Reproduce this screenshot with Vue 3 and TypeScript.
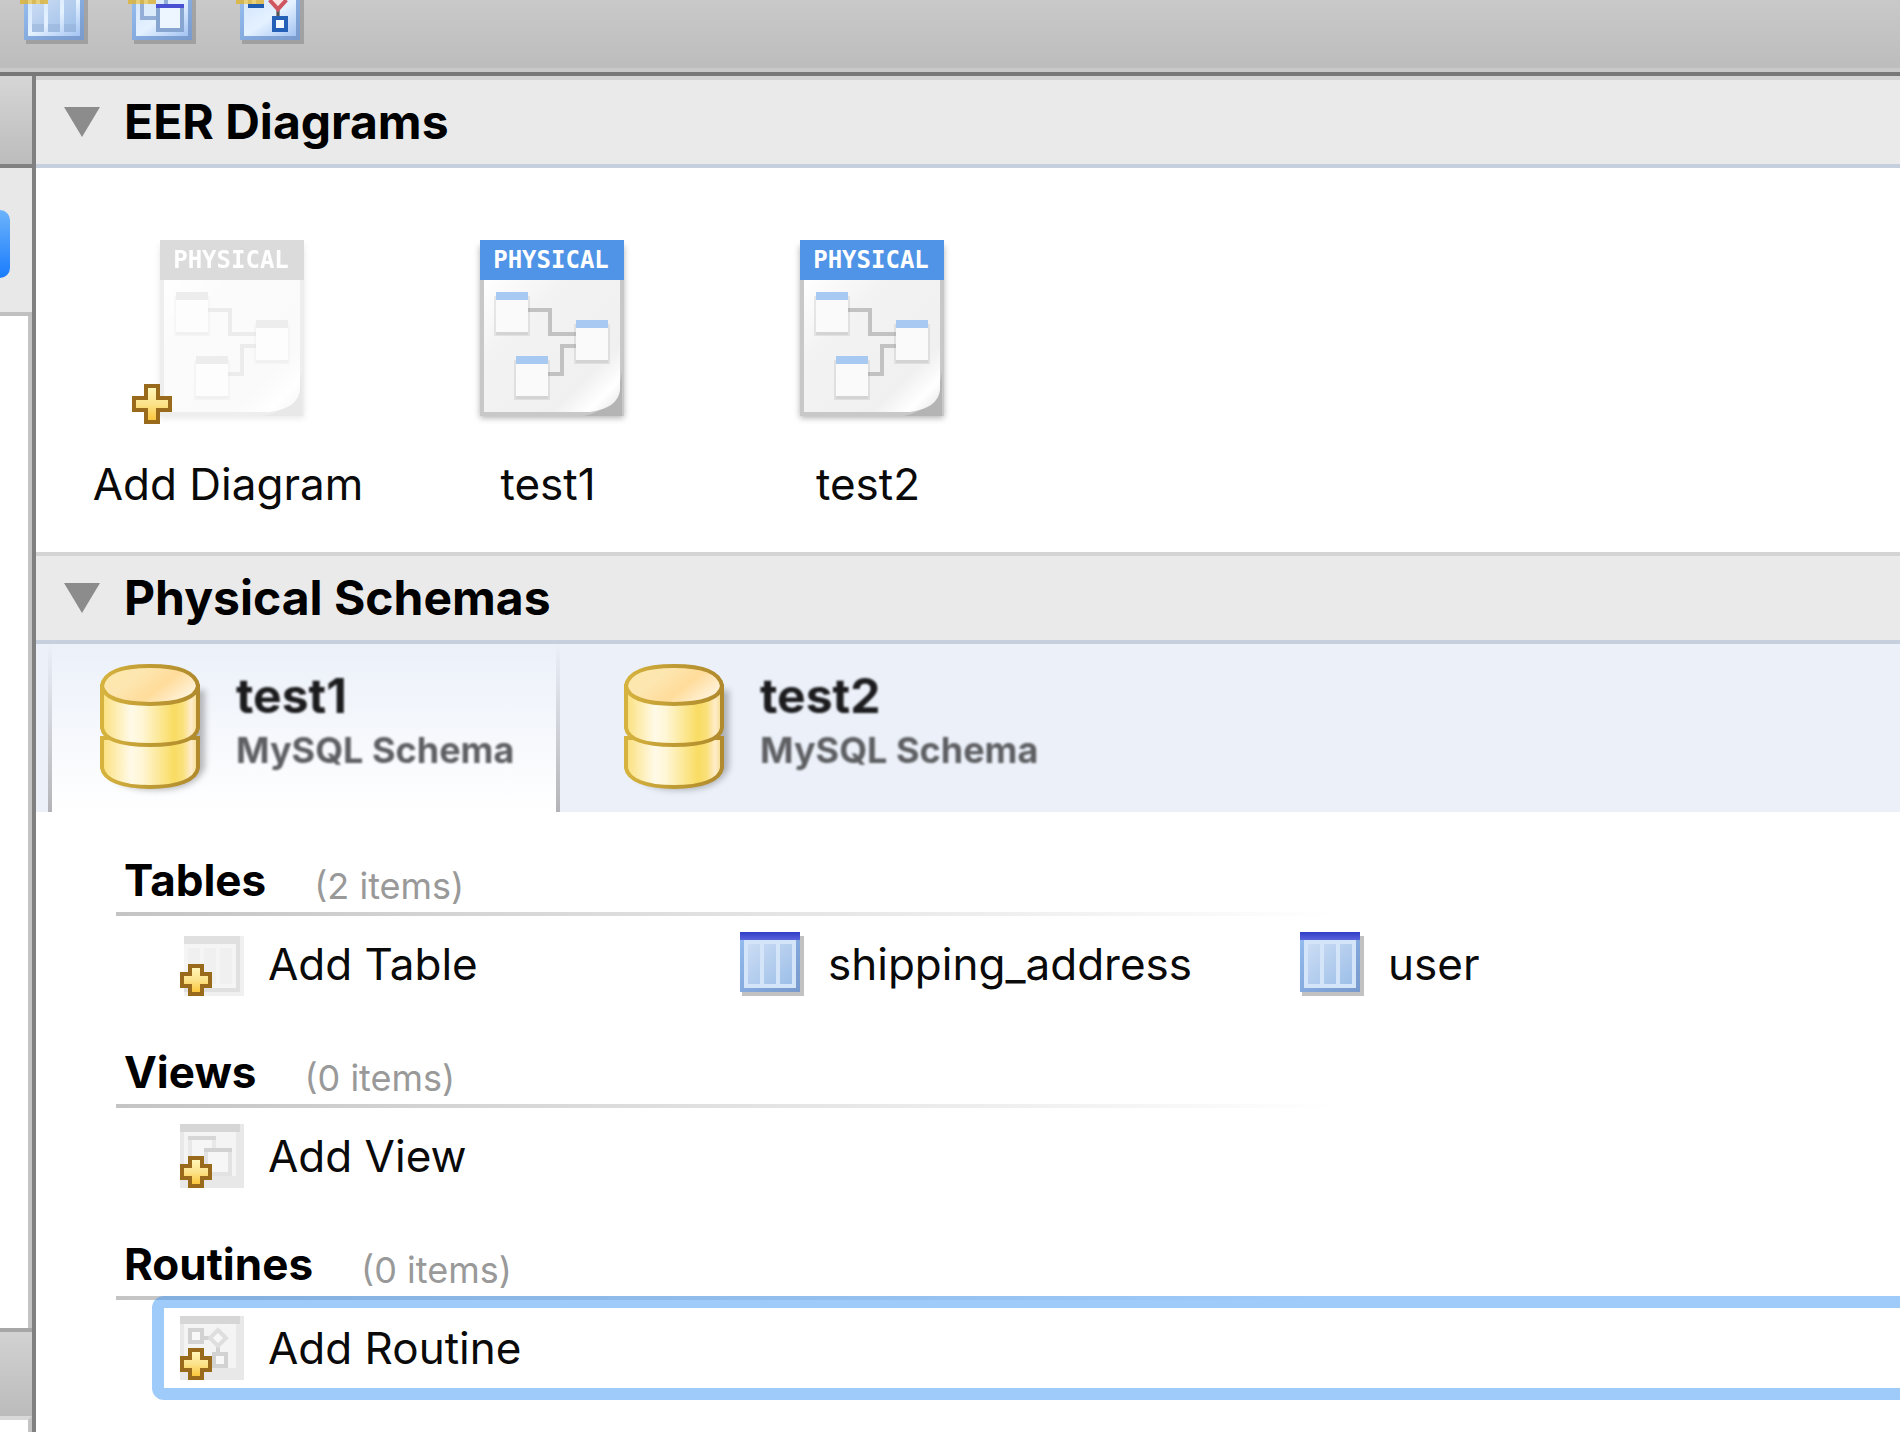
<script setup lang="ts">
import { ref } from 'vue'

type ItemKind = 'table' | 'view' | 'routine'

interface Item {
  label: string
  add: boolean
}

interface Group {
  title: string
  kind: ItemKind
  count: string
  focused: boolean
  items: Item[]
}

const tools: { kind: ItemKind; label: string }[] = [
  { kind: 'table', label: 'New table' },
  { kind: 'view', label: 'New view' },
  { kind: 'routine', label: 'New routine' },
]

const diagrams: Item[] = [
  { label: 'Add Diagram', add: true },
  { label: 'test1', add: false },
  { label: 'test2', add: false },
]

const schemas = ['test1', 'test2']
const activeSchema = ref('test1')

const groups: Group[] = [
  {
    title: 'Tables',
    kind: 'table',
    count: '(2 items)',
    focused: false,
    items: [
      { label: 'Add Table', add: true },
      { label: 'shipping_address', add: false },
      { label: 'user', add: false },
    ],
  },
  { title: 'Views', kind: 'view', count: '(0 items)', focused: false, items: [{ label: 'Add View', add: true }] },
  { title: 'Routines', kind: 'routine', count: '(0 items)', focused: true, items: [{ label: 'Add Routine', add: true }] },
]
</script>

<template>
  <div class="app">
    <svg class="defs" width="0" height="0" aria-hidden="true">
      <defs>
        <linearGradient id="gold" x1="0" y1="0" x2="0" y2="1">
          <stop offset="0" stop-color="#fff6b8" />
          <stop offset="0.5" stop-color="#fbe28a" />
          <stop offset="1" stop-color="#fbc63c" />
        </linearGradient>
        <linearGradient id="cell" x1="0" y1="0" x2="1" y2="1">
          <stop offset="0" stop-color="#cbdcf4" />
          <stop offset="1" stop-color="#9dbfe8" />
        </linearGradient>
        <linearGradient id="frame" x1="0" y1="0" x2="1" y2="1">
          <stop offset="0" stop-color="#94bdf0" />
          <stop offset="1" stop-color="#7899cc" />
        </linearGradient>
        <linearGradient id="sheen" x1="0" y1="0" x2="1" y2="1">
          <stop offset="0" stop-color="#d4e6fc" />
          <stop offset="0.5" stop-color="#e4f1ff" />
          <stop offset="1" stop-color="#a3c3f2" />
        </linearGradient>
        <linearGradient id="bar" x1="0" y1="0" x2="0" y2="1">
          <stop offset="0" stop-color="#2f3cc4" />
          <stop offset="1" stop-color="#5a62dc" />
        </linearGradient>
        <linearGradient id="paper" x1="0" y1="0" x2="1" y2="1">
          <stop offset="0" stop-color="#ffffff" />
          <stop offset="0.3" stop-color="#f4f3f3" />
          <stop offset="0.75" stop-color="#f1f0f0" />
          <stop offset="0.88" stop-color="#ffffff" />
          <stop offset="1" stop-color="#e4e4e4" />
        </linearGradient>
        <linearGradient id="drum" x1="0" y1="0" x2="1" y2="0">
          <stop offset="0" stop-color="#fbe07c" />
          <stop offset="0.3" stop-color="#fffae8" />
          <stop offset="0.42" stop-color="#fff6d4" />
          <stop offset="0.75" stop-color="#f9dc62" />
          <stop offset="0.84" stop-color="#fae07a" />
          <stop offset="0.93" stop-color="#ffeccb" />
          <stop offset="1" stop-color="#f5dc84" />
        </linearGradient>
        <linearGradient id="lid" x1="0" y1="0" x2="1" y2="0.5">
          <stop offset="0" stop-color="#fbe9ac" />
          <stop offset="0.4" stop-color="#fde6b0" />
          <stop offset="0.7" stop-color="#ffdc9a" />
          <stop offset="1" stop-color="#fff0d4" />
        </linearGradient>
        <linearGradient id="rim" x1="0" y1="0" x2="1" y2="0">
          <stop offset="0" stop-color="#d6b23e" />
          <stop offset="0.5" stop-color="#bf9b34" />
          <stop offset="1" stop-color="#b08a2c" />
        </linearGradient>
        <filter id="soft" x="-20%" y="-20%" width="150%" height="150%">
          <feGaussianBlur stdDeviation="3" />
        </filter>
      </defs>
    </svg>

    <header class="toolbar">
      <button v-for="tool in tools" :key="tool.kind" class="tool" type="button" :aria-label="tool.label">
        <svg viewBox="-1 5 17 11" aria-hidden="true">
          <path d="M0.5 5h15.5v11h-15.5z" fill="#777" opacity="0.45" />
          <path d="M0 5h15v10h-15z" fill="url(#frame)" />
          <path d="M1 5h13v9h-13z" fill="url(#sheen)" />
          <g v-if="tool.kind === 'table'">
            <path d="M2 5h3v8h-3zM6 5h3v8h-3zM10 5h3v8h-3z" fill="url(#cell)" />
            <path d="M2 11h3v2h-3zM6 11h3v2h-3zM10 11h3v2h-3z" fill="#8fabd0" opacity="0.4" />
          </g>
          <g v-else-if="tool.kind === 'view'">
            <path d="M2.5 5v4.5h6V5" fill="#dcebfc" stroke="#93afd8" />
            <path d="M6.5 6.5h6v6h-6z" fill="#edf5ff" stroke="#86a5d0" />
            <path d="M6 6h7v1h-7z" fill="#4a50d2" />
          </g>
          <g v-else>
            <path d="M9.5 7.5v2" stroke="#555" stroke-width="0.8" />
            <path d="M7.4 5L9.5 7.3 11.6 5" fill="#fbe3e3" stroke="#cf5560" />
            <path d="M2 6h4v1h-4z" fill="#1d5bb0" />
            <path d="M8.5 9.5h3v3h-3z" fill="#f4faff" stroke="#2560b8" />
          </g>
          <path d="M-1 5h2v1h-2zM2 5h1v1h-1zM4 5h2v1h-2z" fill="#dcb43c" opacity="0.85" />
          <path d="M1 5h1v1h-1zM3 5h1v1h-1z" fill="#e8cf7a" />
        </svg>
      </button>
    </header>

    <div class="workspace">
      <aside class="sidebar">
        <div class="side-head"></div>
        <div class="side-tools">
          <button class="side-select" type="button" aria-label="View options"></button>
        </div>
        <div class="side-list"></div>
        <div class="side-bar"></div>
        <div class="side-foot"></div>
      </aside>

      <main class="content">
        <section>
          <h2 class="section-head">
            <svg class="arrow" viewBox="0 0 36 30" aria-hidden="true"><path d="M0 0h36L18 30z" fill="#8c8c8c" /></svg>
            EER Diagrams
          </h2>
          <div class="diagrams">
            <button v-for="d in diagrams" :key="d.label" class="diagram" type="button">
              <svg class="diagram-icon" viewBox="0 0 192 192" aria-hidden="true">
                <g :class="{ ghost: d.add }">
                  <rect x="28" y="14" width="144" height="172" fill="#555" opacity="0.45" filter="url(#soft)" />
                  <rect x="28" y="40" width="144" height="144" fill="#c8c8c8" />
                  <path d="M132 184q32-6 38-44v44z" fill="#b4b4b4" />
                  <path d="M32 46h136v112q-2 18-30 22H32z" fill="url(#paper)" />
                  <rect x="28" y="8" width="144" height="40" fill="#4f94e6" />
                  <g fill="none" stroke="#c2c2c2" stroke-width="4">
                    <path d="M76 78h22v24h26" />
                    <path d="M96 142h14v-28h14" />
                  </g>
                  <g v-for="box in [[44, 60], [124, 88], [64, 124]]" :key="box[0]">
                    <rect :x="box[0] - 2" :y="box[1] + 4" width="36" height="40" fill="#999" opacity="0.2" />
                    <rect :x="box[0]" :y="box[1]" width="32" height="43" fill="#d4d4d4" />
                    <rect :x="box[0]" :y="box[1]" width="32" height="40" fill="#fafafa" />
                    <rect :x="box[0]" :y="box[1]" width="32" height="8" fill="#a8caf2" />
                  </g>
                  <text x="99" y="36" text-anchor="middle" class="stamp">PHYSICAL</text>
                </g>
                <g v-if="d.add">
                  <path d="M12 152h16v12h12v16H28v12H12v-12H0v-16h12z" fill="#9a6a1c" />
                  <path d="M16 156h8v12h12v8H24v12h-8v-12H4v-8h12z" fill="url(#gold)" />
                </g>
              </svg>
              <span class="diagram-label">{{ d.label }}</span>
            </button>
          </div>
        </section>

        <section>
          <h2 class="section-head">
            <svg class="arrow" viewBox="0 0 36 30" aria-hidden="true"><path d="M0 0h36L18 30z" fill="#8c8c8c" /></svg>
            Physical Schemas
          </h2>
          <div class="tabs" role="tablist">
            <button
              v-for="name in schemas"
              :key="name"
              class="tab"
              :class="{ active: name === activeSchema }"
              type="button"
              role="tab"
              :aria-selected="name === activeSchema"
              @click="activeSchema = name"
            >
              <svg class="drum" viewBox="0 0 104 128" aria-hidden="true">
                <path d="M8 26v78q8 22 48 22t49-22V26z" fill="#555" opacity="0.4" filter="url(#soft)" />
                <g stroke="url(#rim)" stroke-width="4">
                  <path d="M2 74v30c2 12 20 19 48 19s46-7 48-19V74z" fill="url(#drum)" />
                  <path d="M2 22v42c2 12 20 17 48 17s46-5 48-17V22z" fill="url(#drum)" />
                  <path d="M2 22C4 8 22 2 50 2s46 6 48 20c-2 12-20 18-48 18S4 34 2 22z" fill="url(#lid)" />
                </g>
              </svg>
              <span class="tab-text">
                <span class="tab-name">{{ name }}</span>
                <span class="tab-kind">MySQL Schema</span>
              </span>
            </button>
          </div>

          <div class="groups">
            <section v-for="group in groups" :key="group.title" class="group">
              <h3 class="group-head">
                {{ group.title }}
                <span class="count">{{ group.count }}</span>
              </h3>
              <div class="rule"></div>
              <div class="items" :class="{ focused: group.focused }">
                <button v-for="item in group.items" :key="item.label" class="item" type="button">
                  <svg v-if="item.add" class="item-icon" viewBox="0 0 16 16" aria-hidden="true">
                    <g v-if="group.kind === 'table'">
                      <path d="M1 1h15v15h-15z" fill="#f0f0f0" />
                      <path d="M1 1h14v14h-14z" fill="#e0e0e0" />
                      <path d="M1 3h13v11h-13z" fill="#f5f5f5" />
                      <path d="M2 4h3v9h-3zM6 4h3v9h-3zM10 4h3v9h-3z" fill="#f0f0f0" />
                    </g>
                    <g v-else>
                      <path d="M0 0h16v16h-16z" fill="#e8e8e8" />
                      <path d="M0 0h15v2h-15z" fill="#d6d6d6" />
                      <path d="M1 2h13v11h-13z" fill="#f4f4f4" />
                    </g>
                    <g v-if="group.kind === 'view'">
                      <path d="M2.5 3.5h6v6h-6z" fill="#f6f6f6" stroke="#e8e8e8" />
                      <path d="M2 3h7v1h-7z" fill="#d6d6d6" />
                      <path d="M6.5 6.5h6v6h-6z" fill="#f6f6f6" stroke="#e2e2e2" />
                      <path d="M6 6h7v1h-7z" fill="#d2d2d2" />
                    </g>
                    <g v-if="group.kind === 'routine'" fill="#f8f8f8" stroke="#d2d2d2">
                      <path d="M5.5 5.5h3M9.5 7v3" />
                      <path d="M2.5 3.5h3v3h-3z" />
                      <path d="M9.5 3.5l2 2-2 2-2-2z" stroke="#dedede" />
                      <path d="M8.5 9.5h3v3h-3z" />
                    </g>
                    <path d="M2 8h4v2h2v4h-2v2h-4v-2h-2v-4h2z" fill="#9a6a1c" />
                    <path d="M3 9h2v2h2v2h-2v2h-2v-2h-2v-2h2z" fill="url(#gold)" />
                  </svg>
                  <svg v-else class="item-icon" viewBox="0 0 16 16" aria-hidden="true">
                    <path d="M0.5 1h15.5v15h-15.5z" fill="#999" opacity="0.6" />
                    <path d="M0 0h15v15h-15z" fill="url(#frame)" />
                    <path d="M0 0h15v2h-15z" fill="url(#bar)" />
                    <path d="M1 2h13v12h-13z" fill="#d4e4f9" />
                    <path d="M2 3h3v10h-3zM6 3h3v10h-3zM10 3h3v10h-3z" fill="url(#cell)" />
                  </svg>
                  {{ item.label }}
                </button>
              </div>
            </section>
          </div>
        </section>
      </main>
    </div>
  </div>
</template>

<style>
body {
  background: #fff;
}
</style>

<style scoped>
.app {
  display: flex;
  flex-direction: column;
  min-height: 100vh;
  overflow: hidden;
  font-family: Inter, "Liberation Sans", sans-serif;
  font-size: 44px;
  line-height: 56px;
  color: #0a0a0a;
}
.defs {
  position: absolute;
}
button {
  margin: 0;
  padding: 0;
  border: 0;
  background: none;
  font: inherit;
  color: inherit;
  text-align: left;
}
svg {
  display: block;
  flex: none;
}
h2,
h3 {
  margin: 0;
}

.toolbar {
  display: flex;
  gap: 40px;
  height: 68px;
  padding: 0 0 4px 20px;
  background: linear-gradient(#c9c9c9, #bcbcbc);
  border-bottom: 4px solid #787878;
  box-shadow: inset 0 -4px #c9c9c9;
}
.tool {
  height: 44px;
}
.tool svg {
  width: 68px;
  height: 44px;
}

.workspace {
  flex: 1;
  display: flex;
}
.sidebar {
  flex: none;
  display: flex;
  flex-direction: column;
  width: 32px;
  border-right: 4px solid #808080;
}
.side-head {
  height: 88px;
  background: linear-gradient(#d6d6d6, #bcbcbc);
  border-bottom: 4px solid #808080;
}
.side-tools {
  display: flex;
  height: 144px;
  align-items: flex-start;
  background: #e8e8e8;
  border-bottom: 4px solid #c0c0c0;
}
.side-select {
  width: 10px;
  height: 68px;
  margin-top: 42px;
  border-radius: 0 12px 12px 0;
  background: linear-gradient(#6cb3fa, #1a7cfd);
}
.side-list {
  flex: 1;
  border-right: 4px solid #c4c4c4;
}
.side-bar {
  height: 84px;
  background: linear-gradient(#d2d2d2, #bbb);
  border-top: 4px solid #a6a6a6;
}
.side-foot {
  height: 12px;
  border-top: 4px solid #d8d8d8;
  border-right: 4px solid #c4c4c4;
}

.content {
  flex: 1;
  min-width: 0;
}
.section-head {
  display: flex;
  align-items: center;
  gap: 24px;
  padding-left: 28px;
  border-top: 4px solid #d4d4d4;
  border-bottom: 4px solid #c6cfde;
  background: #eaeaea;
  font-size: 48px;
  font-weight: 700;
  line-height: 84px;
  color: #000;
}
.arrow {
  width: 36px;
  height: 30px;
}

.diagrams {
  display: flex;
  padding: 64px 32px 42px;
}
.diagram {
  display: flex;
  flex-direction: column;
  align-items: center;
  gap: 34px;
  width: 320px;
  line-height: 52px;
}
.diagram-icon {
  width: 192px;
  height: 192px;
}
.ghost {
  filter: grayscale(1);
  opacity: 0.3;
}
.stamp {
  font: bold 24px "DejaVu Sans Mono", monospace;
  fill: #fff;
}

.tabs {
  display: flex;
  gap: 12px;
  padding-left: 12px;
  background: #ebf0f9;
}
.tab {
  display: flex;
  gap: 32px;
  width: 512px;
  height: 168px;
  padding: 20px 0 0 52px;
}
.tab.active {
  background:
    linear-gradient(#ebf0f9, #b4b4b8) left / 4px 100% no-repeat,
    linear-gradient(#ebf0f9, #b4b4b8) right / 4px 100% no-repeat,
    linear-gradient(#ebf0f9, #fff);
}
.drum {
  width: 104px;
  height: 128px;
  overflow: visible;
}
.tab-text {
  display: flex;
  flex-direction: column;
  gap: 4px;
  padding-top: 6px;
  font-weight: 700;
  white-space: nowrap;
  filter: blur(1px);
}
.tab-name {
  font-size: 48px;
  line-height: 52px;
  color: #1c1c1e;
}
.tab-kind {
  font-size: 36px;
  line-height: 48px;
  color: #5e5f62;
}

.groups {
  display: flex;
  flex-direction: column;
  gap: 32px;
  padding: 32px 0 32px 80px;
}
.group-head {
  display: flex;
  align-items: flex-end;
  gap: 48px;
  padding: 8px 0 4px 8px;
  font-size: 44px;
  font-weight: 700;
  color: #000;
}
.count {
  font-size: 36px;
  font-weight: 400;
  line-height: 44px;
  color: #999;
}
.rule {
  height: 4px;
  max-width: 1220px;
  background: linear-gradient(90deg, #c4c4c4, #fff);
}
.items {
  display: flex;
  margin: 8px 0 0 48px;
  padding: 8px 16px;
}
.items.focused {
  margin: -4px -24px -12px 36px;
  border: 12px solid rgba(64, 152, 248, 0.5);
  border-radius: 12px;
}
.item {
  display: flex;
  align-items: center;
  gap: 24px;
  width: 560px;
  height: 64px;
  white-space: nowrap;
}
.item-icon {
  width: 64px;
  height: 64px;
}
</style>
